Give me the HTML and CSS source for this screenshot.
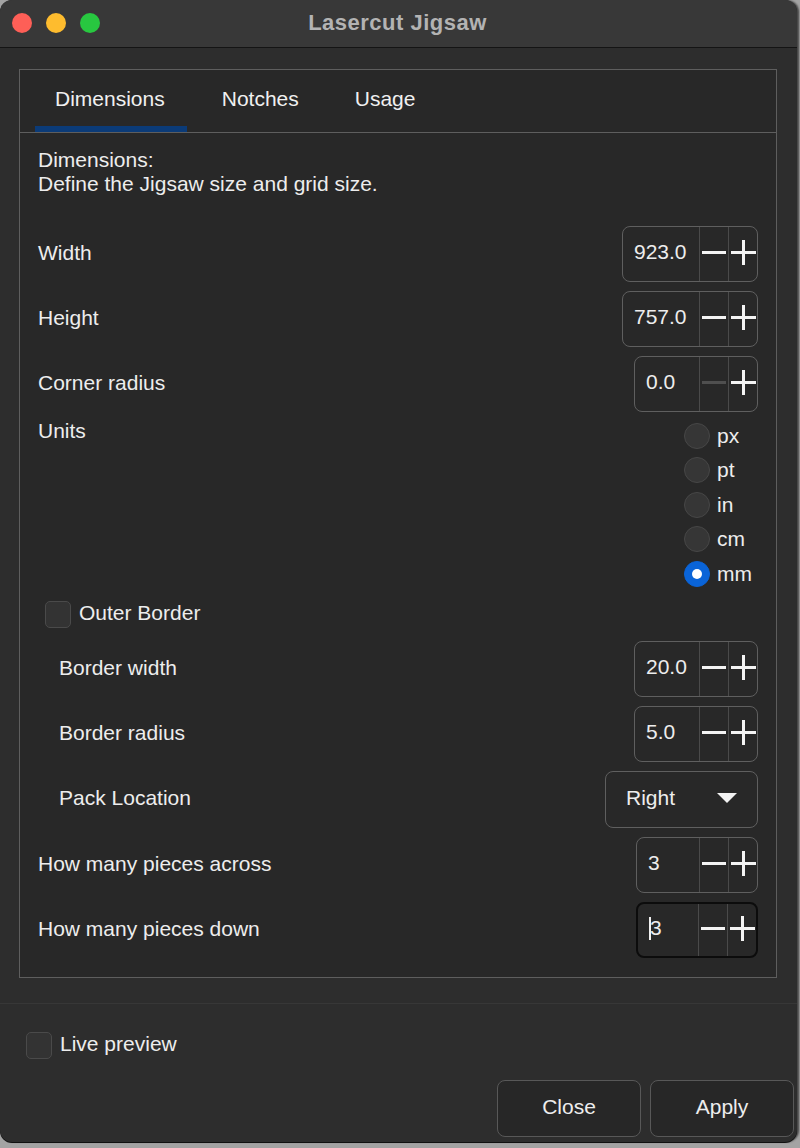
FILE: index.html
```html
<!DOCTYPE html>
<html>
<head>
<meta charset="utf-8">
<link rel="stylesheet" href="styles.css">
</head>
<body>
<div class="window">
  <div class="titlebar">
    <div class="lights">
      <span class="light red"></span>
      <span class="light yellow"></span>
      <span class="light green"></span>
    </div>
    <div class="title">Lasercut Jigsaw</div>
    <div></div>
  </div>
  <div class="main">
    <div class="frame">
      <div class="tabs">
        <div class="tab active">Dimensions</div>
        <div class="tab">Notches</div>
        <div class="tab">Usage</div>
      </div>
      <div class="content">
        <div class="heading">Dimensions:<br>Define the Jigsaw size and grid size.</div>

        <div class="row r-first">
          <span class="label">Width</span>
          <div class="spin w136"><span class="val">923.0</span><span class="btn minus"><i></i></span><span class="btn plus"><i></i></span></div>
        </div>
        <div class="row">
          <span class="label">Height</span>
          <div class="spin w136"><span class="val">757.0</span><span class="btn minus"><i></i></span><span class="btn plus"><i></i></span></div>
        </div>
        <div class="row">
          <span class="label">Corner radius</span>
          <div class="spin w124"><span class="val">0.0</span><span class="btn minus disabled"><i></i></span><span class="btn plus"><i></i></span></div>
        </div>
        <div class="row units">
          <span class="label units-label">Units</span>
          <div class="radios">
            <div class="radio"><span class="dot"></span>px</div>
            <div class="radio"><span class="dot"></span>pt</div>
            <div class="radio"><span class="dot"></span>in</div>
            <div class="radio"><span class="dot"></span>cm</div>
            <div class="radio"><span class="dot checked"></span>mm</div>
          </div>
        </div>
        <div class="checkrow outer">
          <span class="check"></span><span class="label">Outer Border</span>
        </div>
        <div class="row r-after-check indent">
          <span class="label">Border width</span>
          <div class="spin w124"><span class="val">20.0</span><span class="btn minus"><i></i></span><span class="btn plus"><i></i></span></div>
        </div>
        <div class="row indent">
          <span class="label">Border radius</span>
          <div class="spin w124"><span class="val">5.0</span><span class="btn minus"><i></i></span><span class="btn plus"><i></i></span></div>
        </div>
        <div class="row indent combo-row">
          <span class="label">Pack Location</span>
          <div class="combo"><span>Right</span><svg width="20" height="10" viewBox="0 0 20 10"><polygon points="0,0 20,0 10,10" fill="#f2f2f2"/></svg></div>
        </div>
        <div class="row">
          <span class="label">How many pieces across</span>
          <div class="spin w122"><span class="val">3</span><span class="btn minus"><i></i></span><span class="btn plus"><i></i></span></div>
        </div>
        <div class="row">
          <span class="label">How many pieces down</span>
          <div class="spin w122 focused"><span class="val"><span class="caret"></span>3</span><span class="btn minus"><i></i></span><span class="btn plus"><i></i></span></div>
        </div>
      </div>
    </div>
  </div>
  <div class="bottom">
    <div class="checkrow live">
      <span class="check"></span><span class="label">Live preview</span>
    </div>
    <div class="buttons">
      <div class="button">Close</div>
      <div class="button">Apply</div>
    </div>
  </div>
</div>
</body>
</html>
```

FILE: styles.css
```css
* { box-sizing: border-box; }
html, body { margin: 0; padding: 0; }
body {
  width: 800px;
  height: 1148px;
  background: #a3a3a3;
  font-family: "Liberation Sans", Arial, sans-serif;
  font-size: 21px;
  color: #ededed;
  overflow: hidden;
}
.window {
  width: 797px;
  height: 1142px;
  border-radius: 12px;
  background: #2d2d2d;
  overflow: hidden;
  display: flex;
  flex-direction: column;
  box-shadow: 0 1px 0 #111, 2px 0 2px #444;
}
.titlebar {
  height: 48px;
  flex: none;
  background: #383838;
  border-bottom: 1px solid #141414;
  display: grid;
  grid-template-columns: 1fr auto 1fr;
  align-items: center;
}
.lights {
  display: flex;
  gap: 14px;
  padding-left: 12px;
  padding-bottom: 2px;
}
.light {
  width: 20px;
  height: 20px;
  border-radius: 50%;
  display: block;
}
.red { background: #fe5f57; }
.yellow { background: #febc2e; }
.green { background: #28c840; }
.title {
  font-weight: bold;
  font-size: 22px;
  color: #b3b3b3;
  letter-spacing: 0.5px;
  padding-bottom: 2px;
  padding-right: 2px;
}
.main {
  padding: 21px 20px 0 19px;
  flex: none;
}
.frame {
  height: 909px;
  border: 1px solid #5e5e5e;
  background: #282828;
  display: flex;
  flex-direction: column;
}
.tabs {
  height: 63px;
  border-bottom: 1px solid #5e5e5e;
  display: flex;
  gap: 15px;
  padding-left: 15px;
}
.tab {
  padding: 0 21px 5px 20px;
  display: flex;
  align-items: center;
  color: #f0f0f0;
}
.tab.active {
  padding-right: 22px;
  box-shadow: inset 0 -6px 0 #0b3b78;
}
.content {
  padding: 15px 18px 0 18px;
  display: flex;
  flex-direction: column;
}
.heading {
  line-height: 24px;
}
.row {
  height: 56px;
  margin-top: 9px;
  display: flex;
  justify-content: space-between;
  align-items: center;
  flex: none;
}
.row .label { padding-bottom: 3px; }
.row.r-first { margin-top: 30px; }
.row.indent .label { padding-left: 21px; }
.label { white-space: nowrap; }
.spin {
  height: 56px;
  border: 1.5px solid #5f5f5f;
  border-radius: 8px;
  display: flex;
  align-items: stretch;
}
.w136 { width: 136px; }
.w124 { width: 124px; }
.w122 { width: 122px; }
.spin .val {
  flex: 1;
  display: flex;
  align-items: center;
  padding-left: 11px;
  padding-bottom: 4px;
}
.spin .btn {
  border-left: 1px solid #4a4a4a;
  display: flex;
  align-items: center;
  justify-content: center;
  position: relative;
}
.spin .minus { width: 29px; }
.spin .plus { width: 29px; }
.minus i {
  display: block;
  width: 24px;
  height: 3px;
  background: #f4f4f4;
  margin-bottom: 3px;
}
.minus.disabled i { background: #4f4f4f; }
.plus i {
  display: block;
  width: 25px;
  height: 25px;
  margin-bottom: 3px;
  background:
    linear-gradient(#f4f4f4, #f4f4f4) center / 25px 3px no-repeat,
    linear-gradient(#f4f4f4, #f4f4f4) center / 3px 25px no-repeat;
}
.spin.focused {
  border: 2px solid #0c0c0c;
}
.caret {
  display: inline-block;
  width: 2px;
  height: 23px;
  background: #f0f0f0;
  margin-right: -1px;
}
.units {
  height: 170px;
  align-items: flex-start;
}
.units-label { line-height: 20px; }
.radios {
  width: 74px;
  margin-top: -2px;
  display: flex;
  flex-direction: column;
}
.radio {
  height: 34.5px;
  display: flex;
  align-items: center;
  gap: 7px;
  padding-bottom: 1px;
}
.radio .dot {
  width: 26px;
  height: 26px;
  border-radius: 50%;
  background: #363636;
  border: 1px solid #474747;
  display: block;
  flex: none;
}
.radio .dot.checked {
  background: #0a64d8;
  border-color: #0a64d8;
  position: relative;
}
.radio .dot.checked::after {
  content: "";
  position: absolute;
  left: 7px;
  top: 7px;
  width: 10px;
  height: 10px;
  border-radius: 50%;
  background: #fff;
}
.checkrow {
  display: flex;
  align-items: center;
  gap: 8px;
}
.checkrow .label { padding-bottom: 2px; }
.checkrow.outer {
  height: 40px;
  margin-top: 3px;
  padding-left: 7px;
}
.check {
  width: 26px;
  height: 27px;
  border-radius: 5px;
  background: #333;
  border: 1px solid #4a4a4a;
  display: block;
  flex: none;
}
.row.r-after-check { margin-top: 7px; }
.combo-row { height: 57px; }
.combo {
  width: 153px;
  height: 57px;
  border: 1.5px solid #5f5f5f;
  border-radius: 8px;
  display: flex;
  align-items: center;
  justify-content: space-between;
  padding: 0 20px 4px 20px;
}
.bottom {
  margin-top: 25px;
  border-top: 1px solid #373737;
  flex: 1;
  display: flex;
  flex-direction: column;
}
.checkrow.live {
  margin-top: 27px;
  padding-left: 26px;
  height: 28px;
}
.buttons {
  margin-top: auto;
  margin-bottom: 5px;
  display: flex;
  justify-content: flex-end;
  gap: 9px;
  padding-right: 3px;
}
.button {
  width: 144px;
  height: 57px;
  border: 1.5px solid #585858;
  border-radius: 8px;
  background: #272727;
  display: flex;
  align-items: center;
  justify-content: center;
  padding-bottom: 4px;
}
```
